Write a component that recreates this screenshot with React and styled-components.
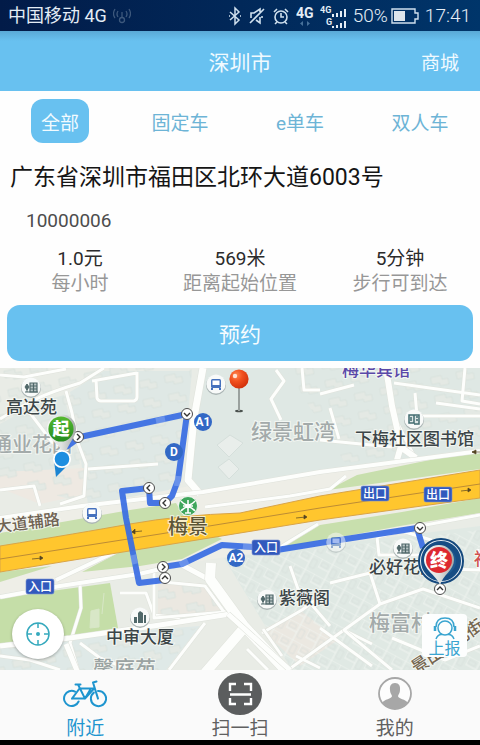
import React from "react"

import styled, { createGlobalStyle } from 'styled-components'

const sky = '#68c1f0'
const active = '#1e95cf'

const GlobalStyle = createGlobalStyle`
    * {
        box-sizing: border-box;
    }
    body {
        margin: 0;
        background: #000;
        font-family: Roboto, 'Noto Sans CJK SC', sans-serif;
    }
    button {
        font-family: inherit;
        border: none;
        padding: 0;
        cursor: pointer;
    }
    a {
        text-decoration: none;
    }
`;

const Page = styled.div`
    display: flex;
    flex-direction: column;
    min-height: 100vh;
    background: #fefefe;
    border-bottom: 5px solid #000;
`;

const StatusBar = styled.div`
    display: flex;
    align-items: center;
    justify-content: space-between;
    height: 31px;
    padding: 0 9px 0 8px;
    background: linear-gradient(90deg, #021b48, #00356a);
    color: #e4edf6;
    font-size: 18px;
    line-height: 30px;
`;

const StatusGroup = styled.div`
    display: flex;
    align-items: center;
    gap: ${props => props.$gap}px;
`;

const Reading = styled.span`
    font-size: 19px;
    font-weight: 300;
`;

const Header = styled.header`
    display: grid;
    grid-template-columns: 1fr auto 1fr;
    align-items: center;
    height: 60px;
    padding: 0 21px;
    background: linear-gradient(#5aa9d6, ${sky} 10px);
`;

const Title = styled.h1`
    grid-column: 2;
    margin: 0;
    color: #f0faff;
    font-size: 21px;
    font-weight: 400;
`;

const HeaderLink = styled.a`
    justify-self: end;
    color: #f0faff;
    font-size: 19px;
`;

const Tabs = styled.nav`
    display: grid;
    grid-template-columns: repeat(4, 1fr);
    justify-items: center;
    padding-top: 8px;
`;

const Tab = styled.button`
    height: 44px;
    padding: 0 10px;
    border-radius: 12px;
    font-size: 19px;
    background: ${props => props.$on ? sky : 'transparent'};
    color: ${props => props.$on ? '#f2fbff' : '#6db4d6'};
`;

const Address = styled.h2`
    margin: 20px 11px 0 10px;
    color: #151515;
    font-size: 23px;
    font-weight: 400;
    line-height: 30px;
`;

const BikeNumber = styled.p`
    margin: 16px 26px 0;
    color: #4d4d4d;
    font-size: 19px;
    line-height: 24px;
`;

const Stats = styled.dl`
    display: grid;
    grid-template-columns: repeat(3, 1fr);
    margin: 13px 0 0;
    font-size: 19px;
    line-height: 25px;
    text-align: center;
`;

const Stat = styled.div`
    display: flex;
    flex-direction: column-reverse;
`;

const StatLabel = styled.dt`
    color: #979797;
`;

const StatValue = styled.dd`
    margin: 0;
    color: #2b2b2b;
`;

const ReserveButton = styled.button`
    height: 56px;
    margin: 9px 7px 7px;
    border-radius: 13px;
    background: ${sky};
    color: #f6fcff;
    font-size: 21px;
`;

const MapArea = styled.section`
    position: relative;
    flex: 1 0 240px;
    overflow: hidden;
    background: #e6ebe5;
`;

const MapCanvas = styled.svg`
    position: absolute;
    inset: 0;
    width: 100%;
    height: 100%;
    font-family: Roboto, 'Noto Sans CJK SC', sans-serif;
`;

const LocateButton = styled.button`
    position: absolute;
    left: 12px;
    bottom: 11px;
    display: flex;
    align-items: center;
    justify-content: center;
    width: 52px;
    height: 50px;
    border-radius: 50%;
    background: #fff;
    box-shadow: 0 1px 3px rgba(0, 0, 0, 0.3);
`;

const ReportButton = styled.button`
    position: absolute;
    right: 13px;
    bottom: 13px;
    display: flex;
    flex-direction: column;
    align-items: center;
    justify-content: flex-end;
    width: 45px;
    height: 43px;
    border-radius: 4px;
    background: #fdfefe;
    color: #3aa5d0;
    font-size: 16px;
    line-height: 16px;
`;

const BottomNav = styled.nav`
    display: grid;
    grid-template-columns: repeat(3, 1fr);
    padding: 0 8px;
    background: #fafafa;
`;

const NavItem = styled.a`
    display: flex;
    flex-direction: column;
    align-items: center;
    height: 70px;
    color: ${props => props.$on ? active : '#606060'};
    font-size: 19px;
    line-height: 23px;
`;

const NavIcon = styled.span`
    display: flex;
    align-items: center;
    height: 47px;
`;

const tabs = ['全部', '固定车', 'e单车', '双人车']

const stats = [
    { value: '1.0元', label: '每小时' },
    { value: '569米', label: '距离起始位置' },
    { value: '5分钟', label: '步行可到达' },
]

const labels = [
    { text: '高达苑', x: 6, y: 39, size: 17, fill: '#3c4548' },
    { text: '通业花园', x: -8, y: 77, size: 20, fill: '#a3aaaa' },
    { text: '绿景虹湾', x: 251, y: 64, size: 21, fill: '#a3aaaa' },
    { text: '梅华宾馆', x: 342, y: 2, size: 17, fill: '#5a48a8' },
    { text: '下梅社区图书馆', x: 355, y: 71, size: 17, fill: '#3c4548' },
    { text: '梅景', x: 168, y: 159, size: 20, fill: '#5d5536' },
    { text: '紫薇阁', x: 279, y: 230, size: 17, fill: '#3c4548' },
    { text: '必好花园', x: 369, y: 199, size: 17, fill: '#3c4548' },
    { text: '中审大厦', x: 106, y: 269, size: 17, fill: '#3c4548' },
    { text: '梅富村', x: 369, y: 255, size: 21, fill: '#a3aaaa' },
    { text: '馨庭苑', x: 93, y: 301, size: 21, fill: '#9aa3a2' },
    { text: '福', x: 474, y: 191, size: 17, fill: '#d05050' },
    { text: '大道辅路', x: -4, y: 159, size: 16, fill: '#6f6252', turn: -7 },
    { text: '景田', x: 413, y: 301, size: 17, fill: '#756650', turn: -33 },
    { text: '北街', x: 453, y: 274, size: 17, fill: '#756650', turn: -33 },
]

const signs = [
    { text: '出口', x: 361, y: 118 },
    { text: '出口', x: 424, y: 119 },
    { text: '入口', x: 26, y: 211 },
    { text: '入口', x: 252, y: 172 },
]

const exits = [
    { text: 'A1', x: 203, y: 54 },
    { text: 'D', x: 174, y: 84 },
    { text: 'A2', x: 236, y: 190 },
]

const nodes = [
    { x: 78, y: 69, turn: 0 },
    { x: 187, y: 46, turn: 90 },
    { x: 149, y: 120, turn: 180 },
    { x: 165, y: 135, turn: 180 },
    { x: 165, y: 210, turn: -90 },
    { x: 163, y: 199, turn: 0 },
    { x: 420, y: 160, turn: 90 },
    { x: 440, y: 221, turn: -90 },
]

const minorRoads = [
    'M0 51Q18 40 34 32T80 15L104 0',
    'M0 7L24 9L66 1',
    'M66 23L72 45L78 75L86 96L84 128L60 136',
    'M96 11L97 30Q98 33 101 33H134Q137 32 137 29V4M92 13L137 5',
    'M0 122L34 118L40 138M88 101L158 96M30 45L52 74L66 80',
    'M276 2L284 13L271 31L281 52M302 0L304 22H320',
    'M320 26L354 17M330 40L339 71M320 72L392 79M394 15L480 27M465 0L462 33L480 36',
    'M415 25L417 48H480M436 35L480 41M390 40L414 88',
    'M80 215L81 240L70 275L78 302',
    'M80 275L100 290L126 300M120 225H146L154 247L180 250',
    'M205 255L169 302M163 214L205 218L224 244M154 204V250L226 244',
    'M262 265L302 242L325 225M247 281L268 302M290 198L298 221L330 258',
    'M263 261L282 288M296 288L320 300M320 260L372 298M288 302L344 262L372 276',
    'M377 169L402 163L444 176M377 169L379 187H420M448 201L480 202L478 181',
    'M330 215L370 205L380 236L344 262L392 302M380 236L423 221L480 240',
    'M0 288L30 292L60 302M392 270L445 292L480 278',
]

const Road = ({ d, width = 4, color = '#fdfefc' }) => (
    <g fill="none" strokeLinejoin="round">
        <path d={d} stroke="#dfe2db" strokeWidth={width + 1} />
        <path d={d} stroke={color} strokeWidth={width} />
    </g>
)

const Spot = ({ x, y, children }) => (
    <g transform={`translate(${x} ${y})`}>
        <circle cy="1" r="10" fill="#abb5b5" />
        <circle r="9.6" fill="#f8faf9" />
        {children}
    </g>
)

const Estate = ({ x, y }) => (
    <Spot x={x} y={y}>
        <path d="M-1-4H6V5H-1ZM-1-1H6M-1 2H6M2.5-4V5" fill="#b9c5c5" stroke="#50686a" strokeWidth="1.2" />
        <path d="M-4-3L-6 0L-4 3L-2 0ZM-4 0V5M-6 5H7" fill="#50686a" stroke="#50686a" strokeWidth="1" />
    </Spot>
)

const Bus = ({ x, y, opacity = 1 }) => (
    <g opacity={opacity}>
        <Spot x={x} y={y}>
            <rect x="-5" y="-5" width="10" height="9" rx="1.5" fill="#4571bd" />
            <rect x="-3.5" y="-3.5" width="7" height="4.5" fill="#fff" />
            <path d="M-4 4V6M4 4V6" stroke="#4571bd" strokeWidth="2" />
        </Spot>
    </g>
)

const CityMap = () => (
    <MapCanvas viewBox="0 0 480 302" preserveAspectRatio="xMidYMid slice" role="img" aria-label="梅景">
        <defs>
            <pattern id="parcels" width="26" height="19" patternUnits="userSpaceOnUse" patternTransform="rotate(-12)">
                <path d="M3 4H14V8H20V14H11V11H3Z" fill="#e4e9e4" stroke="#d4ddd9" strokeWidth="0.6" />
            </pattern>
            <pattern id="lots" width="22" height="17" patternUnits="userSpaceOnUse" patternTransform="rotate(28)">
                <path d="M0 0H22M0 0V9M12 0V17M0 9H12" fill="none" stroke="#eff3ef" strokeWidth="1" />
                <path d="M2 3H9V7H2ZM14 4H19V13H14Z" fill="none" stroke="#d5deda" strokeWidth="0.6" />
            </pattern>
            <radialGradient id="red" cx="0.35" cy="0.3" r="0.8">
                <stop offset="0" stopColor="#ff8a52" />
                <stop offset="0.4" stopColor="#f2511f" />
                <stop offset="1" stopColor="#cc2b07" />
            </radialGradient>
            <linearGradient id="green" x2="0" y2="1">
                <stop offset="0" stopColor="#55b92f" />
                <stop offset="1" stopColor="#258b20" />
            </linearGradient>
            <linearGradient id="silver">
                <stop offset="0" stopColor="#f5f6f5" />
                <stop offset="0.5" stopColor="#dfe2e0" />
                <stop offset="1" stopColor="#a4aaa8" />
            </linearGradient>
        </defs>

        <path d="M0 0H480V302H0Z" fill="#e9ece6" />
        <path d="M70 24L104 3H192L182 112L160 128L88 136Z" fill="#dfe8e5" />
        <path d="M200 0H480V80L320 103L203 124L190 108Z" fill="#dfe8e4" />
        <path d="M0 56L40 34L64 27L80 96L0 112Z" fill="#e0e8e4" />
        <path d="M85 100L86 126L40 136L0 120V104Z" fill="#eee9e2" />
        <path d="M0 278L120 264L200 258L166 302H0Z" fill="#dfe9e7" />
        <path d="M224 190L480 158V302H292Z" fill="#e0e9e4" />
        <path d="M262 262L300 242L338 272L300 298Z" fill="#ebe8e1" />
        <path d="M158 212L206 216L222 242L158 250Z" fill="#ebe8e1" />
        <path d="M0 0H192L182 112L80 134L0 112ZM285 0H480V78L345 95Z" fill="url(#parcels)" />
        <path d="M158 212L206 216L222 242L158 250ZM0 280L196 260L166 302H0Z" fill="url(#parcels)" />
        <path d="M226 192L480 162V302H292Z" fill="url(#lots)" />
        <path d="M217 77L230 67L243 75L229 89ZM218 99L229 91L239 101L229 111Z" fill="#e9eeeb" stroke="#d5dfdb" />

        <path d="M0 150L82 138L190 118L200 124L480 83V146L300 178L180 196L0 226Z" fill="#eeeee7" />
        <path d="M0 165L130 142L176 135L186 152L130 158L0 179ZM328 122L357 107L420 94L480 82V101L387 114Z" fill="#c8dfad" />
        <path d="M0 204L52 198L0 214ZM82 204L118 185L160 176L216 168L222 171L182 191L140 198ZM282 180L320 157L402 144L480 130V145L400 158Z" fill="#c8dfad" />
        <path d="M0 230L110 215L118 260L68 270L0 276Z" fill="#c5dea8" />
        <path d="M91 243L99 241V259L90 260ZM104 225L102 246" fill="#d8e7c7" stroke="#d8e7c7" />

        {minorRoads.map(d => <Road key={d} d={d} width={3} />)}
        <Road d="M203 0L194 50L188 112L200 126" width={7} />
        <Road d="M386 0L392 38L401 78L397 92M402 80L416 90" width={6} />
        <Road d="M0 150L82 138L203 124L320 104L480 83" width={4} />
        <Road d="M205 139L290 128L330 121L346 108" width={3} />
        <Road d="M0 229L60 218L139 206L182 196M56 212L115 184" width={4} />
        <Road d="M0 278L70 270L160 257L230 246M182 197L208 211" width={5} />
        <Road d="M211 195L210 211L244 258L288 305M244 260L205 305" width={10} />
        <Road d="M228 246L290 302M66 276L78 305" width={5} />
        <Road d="M420 158L480 147M277 181L318 156" width={3} />

        <path d="M0 178Q80 165 130 156T240 145L320 128L480 102V130L320 152L160 178L0 204Z" fill="#ffc62e" stroke="#d9a447" />
        <path d="M0 191L160 166L320 140L480 116" fill="none" stroke="#bd8c35" />
        <g stroke="#554522" fill="#554522">
            <path d="M32 191L42 190M40 188L43 190L40 192ZM132 164L142 163M135 161L132 164L135 166ZM296 150L306 149M304 147L307 149L304 151ZM461 123L470 122M468 120L471 122L468 124ZM472 84H480M476 82L472 84L476 86Z" strokeWidth="0.7" />
        </g>

        {labels.map(l => (
            <text
                key={l.text}
                transform={`translate(${l.x} ${l.y}) rotate(${l.turn || 0})`}
                dominantBaseline="central"
                fontSize={l.size}
                fontWeight="500"
                fill={l.fill}
                stroke="#f8faf6"
                strokeWidth="2"
                strokeOpacity="0.8"
                paintOrder="stroke">
                {l.text}
            </text>
        ))}

        <Estate x={31} y={19} />
        <Estate x={267} y={231} />
        <Estate x={403} y={180} />
        <Spot x={140} y={249}>
            <path d="M-6 6V0H-3V6ZM-2 6V-4L0-6L3-4V6ZM4 6V-2H6V6Z" fill="#50686a" />
        </Spot>
        <Spot x={414} y={51}>
            <path d="M-5-4H0V4H-5ZM0-4H5V5H0M-3-2V2M2-2H4M2 1H4" fill="#dce5e5" stroke="#426c70" strokeWidth="1.5" />
        </Spot>
        <Bus x={216} y={16} />
        <Bus x={92} y={145} />

        <circle cx="188" cy="138" r="9.5" fill="#3fa65c" stroke="#fff" strokeWidth="0.8" />
        <path d="M181 133Q188 141 195 133M181 143Q188 135 195 143M188 132V145M183 138H193M185 145H191" fill="none" stroke="#fff" strokeWidth="1.6" />

        <g fill="none" stroke="#376be3" strokeWidth="6" strokeOpacity="0.92" strokeLinejoin="round">
            <path d="M66 79L80 69L187 46L178 112L172 128L165 135L150 135L149 120L122 123L126 150L139 215L164 212" />
            <path d="M163 199L182 196L222 177L253 179L277 182L320 175L417 160L423 180" />
        </g>
        <g fill="none" stroke="#9dbcf4" strokeWidth="6" strokeOpacity="0.4">
            <path d="M156 53L165 51M178 108L177 118M180 197L188 193M243 178L252 179M133 187L135 196" />
        </g>
        <Bus x={336} y={174} opacity={0.5} />

        {exits.map(e => (
            <g key={e.text}>
                <circle cx={e.x} cy={e.y} r="9" fill="#3268c5" />
                <text x={e.x} y={e.y} dominantBaseline="central" textAnchor="middle" fontSize="12" fontWeight="700" fill="#fff">{e.text}</text>
            </g>
        ))}

        {signs.map(s => (
            <g key={s.x}>
                <rect x={s.x} y={s.y} width="28" height="15" rx="2" fill="#3259bd" stroke="#7891d0" strokeWidth="0.6" />
                <text x={s.x + 14} y={s.y + 8} dominantBaseline="central" textAnchor="middle" fontSize="12" fontWeight="500" fill="#fff">{s.text}</text>
            </g>
        ))}

        {nodes.map(n => (
            <g key={`${n.x}-${n.y}`} transform={`translate(${n.x} ${n.y}) rotate(${n.turn})`}>
                <circle r="5.5" fill="#fff" stroke="#4c4c4c" strokeWidth="1" />
                <path d="M-1-3L2 0L-1 3" fill="none" stroke="#333" strokeWidth="1.4" />
            </g>
        ))}

        <ellipse cx="239" cy="43" rx="4" ry="1.3" fill="#4c5350" />
        <path d="M239 18V43" stroke="#9aa19e" strokeWidth="2" />
        <circle cx="239" cy="11" r="9.6" fill="url(#red)" />
        <circle cx="235" cy="8" r="2.2" fill="#ffe2d2" />

        <path d="M47 61A14.5 14.5 0 0 1 76 61C76 69 68 76 65 86C58 75 47 71 47 61Z" fill="url(#silver)" />
        <circle cx="61" cy="61" r="12.6" fill="url(#green)" />
        <text x="61" y="61" dominantBaseline="central" textAnchor="middle" fontSize="17" fontWeight="900" fill="#fff">起</text>
        <path d="M54 92L56 109L68 97Z" fill="#1c84d2" />
        <circle cx="62" cy="91" r="8.2" fill="#1e8ee0" stroke="#fff" strokeWidth="1.8" />

        <circle cx="441" cy="193" r="22" fill="#e9f0f5" stroke="#14487d" strokeWidth="2" />
        <circle cx="441" cy="193" r="17.5" fill="#1e5b92" stroke="#164d84" strokeWidth="5" />
        <path d="M424 192A15 15 0 0 1 454 192C454 202 443 207 440 217C437 208 424 202 424 192Z" fill="url(#silver)" />
        <circle cx="439" cy="192" r="13" fill="#dd2930" />
        <text x="439" y="192" dominantBaseline="central" textAnchor="middle" fontSize="18" fontWeight="900" fill="#fff">终</text>
    </MapCanvas>
)

const StatusIcons = () => (
    <>
        <svg width="14" height="20" viewBox="0 0 14 20" fill="none" stroke="#cfe0ee" strokeWidth="1.5">
            <path d="M2 6L11 14L7 18V2L11 6L2 14" />
            <path d="M1 10H2M12 10H13" />
        </svg>
        <svg width="18" height="20" viewBox="0 0 18 20" fill="none" stroke="#cfe0ee" strokeWidth="1.6">
            <path d="M2 17L16 3M3 12V7H6L12 3V6M12 11V17L8 14" />
            <path d="M14 10V12" />
        </svg>
        <svg width="18" height="20" viewBox="0 0 18 20" fill="none" stroke="#cfe0ee" strokeWidth="1.6">
            <circle cx="9" cy="11" r="6" />
            <path d="M9 7V11H12M2 6L5 3M16 6L13 3M5 16L3 18M13 16L15 18" />
        </svg>
        <svg width="18" height="24" viewBox="0 0 18 24">
            <text x="0" y="14" fontSize="14" fontWeight="700" fill="#e4edf6">4G</text>
            <path d="M7 17L4 19.5L7 22ZM11 17L14 19.5L11 22Z" fill="#47719a" />
        </svg>
        <svg width="27" height="26" viewBox="0 0 27 26">
            <text x="0" y="10" fontSize="9" fontWeight="700" fill="#e4edf6">4G</text>
            <text x="6" y="22" fontSize="9" fontWeight="700" fill="#e4edf6">G</text>
            <path d="M13 14V11M17 14V10M21 14V8M25 14V6M17 25V22M21 25V20M25 25V18M13 25V23" stroke="#e4edf6" strokeWidth="2" />
        </svg>
    </>
)

const Bike = () => (
    <svg width="44" height="28" viewBox="0 0 44 28" fill="none" stroke={active} strokeWidth="2" strokeLinecap="round" strokeLinejoin="round">
        <path d="M15.6 21.5A7.6 7.6 0 1 1 12 11.6" />
        <path d="M30.8 12.6A7.6 7.6 0 1 0 35 11" />
        <path d="M9 18.6L16.5 8.5H31L22 18.6L15 4.5M9 18.6H22M12.5 4.5H17.5M35 18.6L30 2.5L33.5 1.5M22 18.6L27 10" />
    </svg>
)

const Scan = () => (
    <svg width="44" height="42" viewBox="0 0 44 42" fill="none">
        <ellipse cx="22" cy="21" rx="22" ry="21" fill="#5b5d5e" />
        <path d="M18 11H12V18M26 11H33V18M12 25V31H18M33 25V31H26M12 21.5H33" stroke="#fff" strokeWidth="2.4" />
    </svg>
)

const Person = () => (
    <svg width="34" height="33" viewBox="0 0 34 33">
        <ellipse cx="17" cy="16.5" rx="16" ry="15.5" fill="#fdfdfd" stroke="#a7a7a7" strokeWidth="1.8" />
        <path d="M17 6C21 6 22.5 9 22 13C22 16 20.5 17 20 19C20 22 28 22 30 26Q25 32 17 32Q9 32 4 26C6 22 14 22 14 19C13.5 17 12 16 12 13C11.5 9 13 6 17 6Z" fill="#a7a7a7" />
    </svg>
)

const App = () => {
    const [tab, setTab] = React.useState(tabs[0])

    return (
        <>
            <GlobalStyle />
            <Page>
                <StatusBar>
                    <StatusGroup $gap={6}>
                        <span>中国移动 4G</span>
                        <svg width="18" height="16" viewBox="0 0 18 16" fill="none" stroke="#3d587c" strokeWidth="1.3">
                            <circle cx="9" cy="12" r="2.5" />
                            <path d="M9 4V9M5 3Q3 6 5 9M13 3Q15 6 13 9M2 1Q-1 6 2 10M16 1Q19 6 16 10" />
                        </svg>
                    </StatusGroup>
                    <StatusGroup $gap={6}>
                        <StatusIcons />
                        <StatusGroup $gap={3}>
                            <Reading>50%</Reading>
                            <svg width="28" height="16" viewBox="0 0 28 16">
                                <path d="M1 1H24V5H27V11H24V15H1Z" fill="none" stroke="#cfe0ee" strokeWidth="1.4" />
                                <path d="M3 3H14V13H3Z" fill="#dce5ec" />
                            </svg>
                        </StatusGroup>
                        <Reading>17:41</Reading>
                    </StatusGroup>
                </StatusBar>
                <Header>
                    <Title>深圳市</Title>
                    <HeaderLink href="#mall">商城</HeaderLink>
                </Header>
                <Tabs>
                    {tabs.map(t => (
                        <Tab key={t} type="button" $on={t === tab} onClick={() => setTab(t)}>{t}</Tab>
                    ))}
                </Tabs>
                <Address>广东省深圳市福田区北环大道6003号</Address>
                <BikeNumber>10000006</BikeNumber>
                <Stats>
                    {stats.map(s => (
                        <Stat key={s.label}>
                            <StatLabel>{s.label}</StatLabel>
                            <StatValue>{s.value}</StatValue>
                        </Stat>
                    ))}
                </Stats>
                <ReserveButton type="button">预约</ReserveButton>
                <MapArea>
                    <CityMap />
                    <LocateButton type="button" aria-label="定位">
                        <svg width="26" height="26" viewBox="0 0 26 26" fill="none" stroke="#35a9bd" strokeWidth="1.5">
                            <circle cx="13" cy="13" r="11" />
                            <path d="M13 2V7M13 19V24M2 13H7M19 13H24" />
                            <circle cx="13" cy="13" r="2" fill="#35a9bd" stroke="none" />
                        </svg>
                    </LocateButton>
                    <ReportButton type="button">
                        <svg width="26" height="25" viewBox="0 0 26 25" fill="none" stroke="#3aa5d0" strokeWidth="1.5">
                            <circle cx="13" cy="12" r="7" />
                            <path d="M4 11Q4 2 13 2T22 11M4 23Q6 18 10 18.5M22 23Q20 18 16 18.5" />
                            <path d="M3 10V15M23 10V15" strokeWidth="2.5" />
                        </svg>
                        上报
                    </ReportButton>
                </MapArea>
                <BottomNav>
                    <NavItem href="#nearby" $on>
                        <NavIcon><Bike /></NavIcon>
                        附近
                    </NavItem>
                    <NavItem href="#scan">
                        <NavIcon><Scan /></NavIcon>
                        扫一扫
                    </NavItem>
                    <NavItem href="#me">
                        <NavIcon><Person /></NavIcon>
                        我的
                    </NavItem>
                </BottomNav>
            </Page>
        </>
    )
}

export default App
